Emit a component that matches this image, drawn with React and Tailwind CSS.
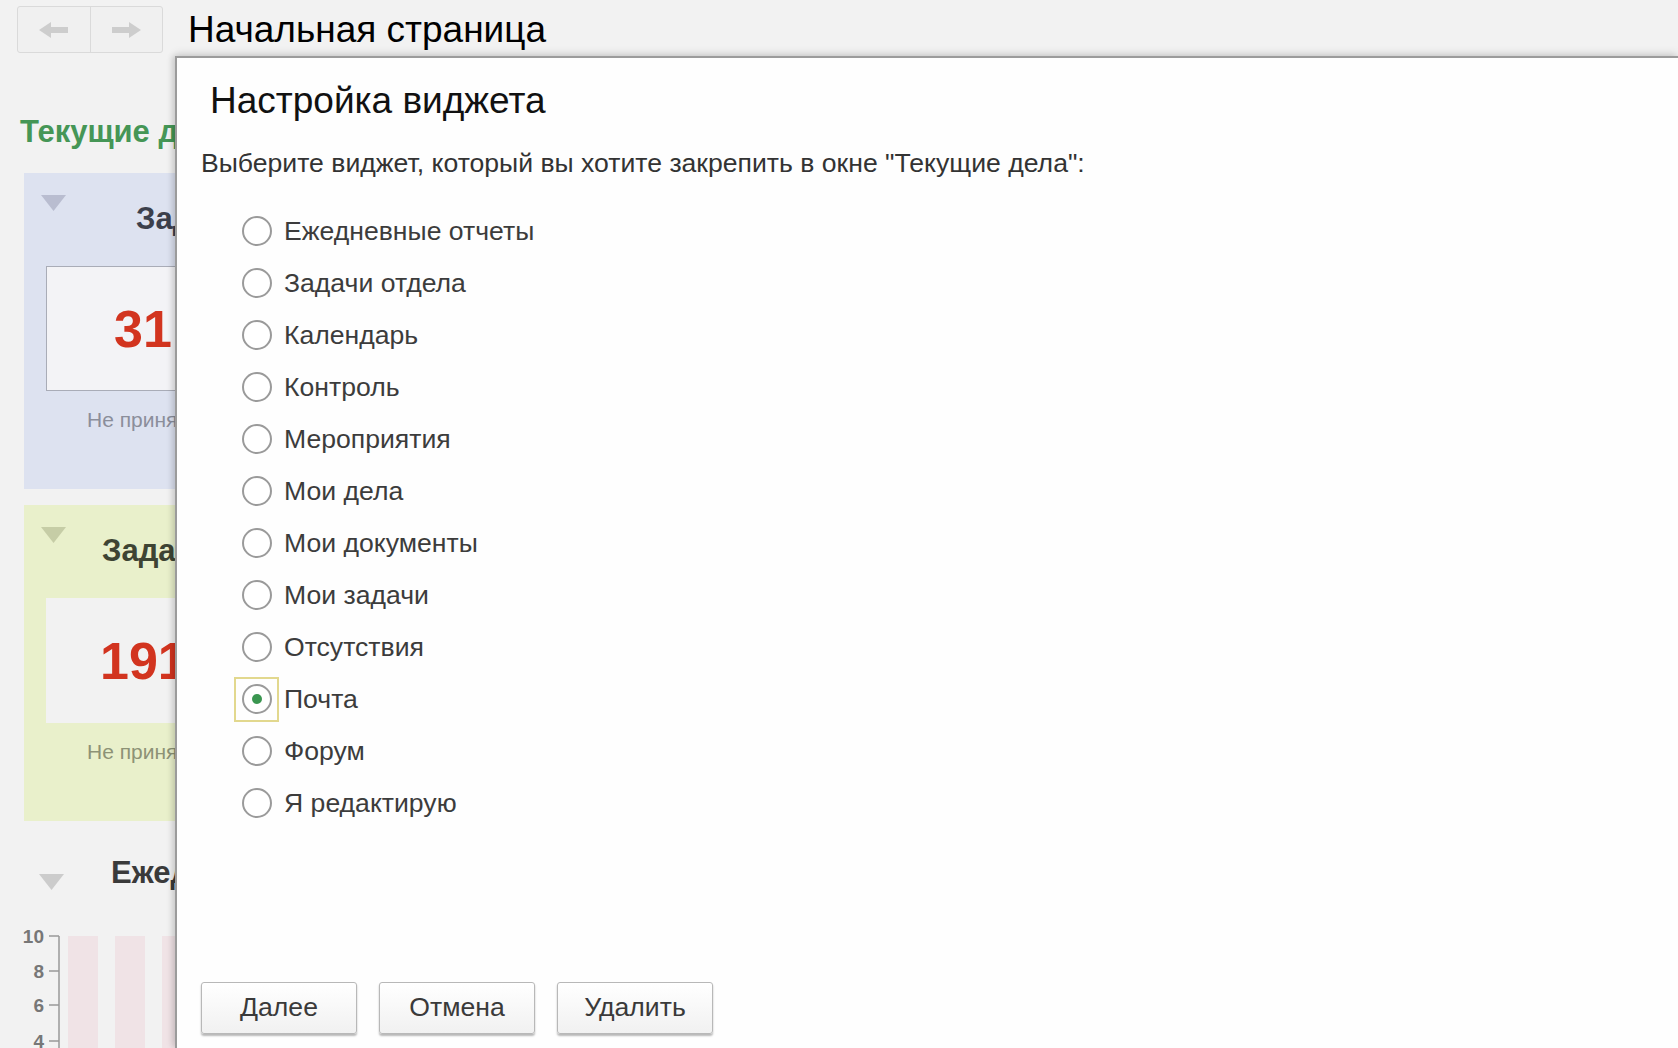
import React from "react";

const options = [
  "Ежедневные отчеты",
  "Задачи отдела",
  "Календарь",
  "Контроль",
  "Мероприятия",
  "Мои дела",
  "Мои документы",
  "Мои задачи",
  "Отсутствия",
  "Почта",
  "Форум",
  "Я редактирую",
];

const Triangle = ({ color, className = "" }) => (
  <svg width="25" height="16" viewBox="0 0 25 16" className={`shrink-0 ${className}`}>
    <polygon points="0,0 25,0 12.5,16" fill={color} />
  </svg>
);

const NavButtons = () => (
  <div className="flex h-[47px] w-[146px] shrink-0 rounded-[3px] border border-[#dadada] bg-[#f0f0f0]">
    <div className="flex flex-1 items-center justify-center border-r border-[#dadada]">
      <svg width="30" height="16" viewBox="0 0 30 16">
        <polygon points="0,8 12,0 12,5 29,5 29,11 12,11 12,16" fill="#cdcdcd" />
      </svg>
    </div>
    <div className="flex flex-1 items-center justify-center">
      <svg width="30" height="16" viewBox="0 0 30 16">
        <polygon points="30,8 18,0 18,5 1,5 1,11 18,11 18,16" fill="#cdcdcd" />
      </svg>
    </div>
  </div>
);

const Widget = ({ bg, tri, title, titleColor, titleGap, box, number, numPad, noteColor }) => (
  <div className={`flex h-[316px] w-[620px] flex-col pl-[17px] pt-[20px] ${bg}`}>
    <div className="flex h-[50px] items-start">
      <Triangle color={tri} className="mt-[2px]" />
      <span
        className={`self-center whitespace-nowrap text-[31px] font-bold leading-none ${titleColor} ${titleGap}`}
      >
        {title}
      </span>
    </div>
    <div className={`ml-[5px] mt-[23px] flex h-[125px] w-[400px] items-center ${box} ${numPad}`}>
      <span className="text-[52px] font-bold leading-none text-[#d2341f]">{number}</span>
    </div>
    <div className={`ml-[46px] mt-[16px] whitespace-nowrap text-[21px] leading-[26px] ${noteColor}`}>
      Не принято к исполнению
    </div>
  </div>
);

const Chart = () => (
  <svg width="175" height="130" viewBox="0 0 175 130" className="mt-[27px] shrink-0">
    {[0, 35, 69, 105].map((y, i) => (
      <g key={i}>
        <text
          x="44"
          y={y + 12 + 7}
          textAnchor="end"
          fontFamily="Liberation Sans, Arial, sans-serif"
          fontWeight="bold"
          fontSize="19"
          fill="#777"
        >
          {["10", "8", "6", "4"][i]}
        </text>
        <line x1="49" x2="59" y1={y + 12} y2={y + 12} stroke="#999" strokeWidth="1.5" />
      </g>
    ))}
    <line x1="59" x2="59" y1="12" y2="130" stroke="#999" strokeWidth="1.5" />
    <rect x="68" y="12" width="30" height="120" fill="#f0e3e6" />
    <rect x="115" y="12" width="30" height="120" fill="#f0e3e6" />
    <rect x="162" y="12" width="30" height="120" fill="#f0e3e6" />
  </svg>
);

const Radio = ({ label, checked }) => (
  <div className="flex h-[52px] items-center">
    <div
      className={`flex h-[45px] w-[45px] items-center justify-center border-2 ${
        checked ? "border-[#e2d88e]" : "border-transparent"
      }`}
    >
      <div className="flex h-[30px] w-[30px] items-center justify-center rounded-full border-2 border-[#9a9a9a] bg-white">
        {checked && <div className="h-[10px] w-[10px] rounded-full bg-[#3a9650]" />}
      </div>
    </div>
    <span className="ml-[5px] text-[26.6px] leading-[30px] text-[#3c3c3c]">{label}</span>
  </div>
);

const Button = ({ children }) => (
  <button className="flex h-[52px] w-[156px] items-center justify-center rounded-[3px] border border-[#b8b8b8] bg-gradient-to-b from-white to-[#f1f1f1] text-[26.6px] text-[#3a3a3a] shadow-[0_2px_2px_rgba(0,0,0,0.28)]">
    {children}
  </button>
);

export default function App() {
  return (
    <div className="relative h-[1048px] w-[1678px] overflow-hidden bg-[#f2f2f2] font-['Liberation_Sans',Arial,sans-serif]">
      {/* header */}
      <div className="flex h-[60px] items-start pl-[17px] pt-[6px]">
        <NavButtons />
        <h1 className="ml-[25px] mt-[3px] text-[37px] leading-[42px] text-black">
          Начальная страница
        </h1>
      </div>

      {/* page behind the dialog */}
      <div className="flex w-[176px] flex-col overflow-hidden">
        <div className="ml-[20px] mt-[56px] whitespace-nowrap text-[31px] font-bold leading-[32px] text-[#459656]">
          Текущие дела
        </div>
        <div className="ml-[24px] mt-[25px] flex flex-col gap-[16px]">
          <Widget
            bg="bg-[#dde2f0]"
            tri="#b9bdd0"
            title="Задачи мне"
            titleColor="text-[#3c404c]"
            titleGap="ml-[70px]"
            box="border border-[#a9acb7] bg-[#f3f3f6]"
            number="31"
            numPad="pl-[67px]"
            noteColor="text-[#8b8e9b]"
          />
          <Widget
            bg="bg-[#e9f0cb]"
            tri="#c6cda6"
            title="Задачи отдела"
            titleColor="text-[#3e4433]"
            titleGap="ml-[36px]"
            box="bg-[#f2f2f2]"
            number="191"
            numPad="pl-[54px]"
            noteColor="text-[#8d9276]"
          />
        </div>
        <div className="ml-[39px] mt-[26px] flex h-[50px] items-start">
          <Triangle color="#cccccc" className="mt-[27px]" />
          <span className="ml-[47px] self-center whitespace-nowrap text-[31px] font-bold leading-none text-[#3a3a3a]">
            Ежедневные отчеты
          </span>
        </div>
        <Chart />
      </div>

      {/* dialog */}
      <div className="absolute bottom-0 left-[175px] right-0 top-[56px] flex flex-col border-l-2 border-t-2 border-[#9b9b9b] bg-[#fefefe] pl-[24px] shadow-[0_-3px_8px_rgba(0,0,0,0.1),-3px_0_6px_rgba(0,0,0,0.12)]">
        <h2 className="ml-[9px] mt-[22px] text-[37px] leading-[42px] text-[#111]">
          Настройка виджета
        </h2>
        <p className="mt-[26px] text-[26.6px] leading-[30px] text-[#333]">
          Выберите виджет, который вы хотите закрепить в окне "Текущие дела":
        </p>
        <div className="ml-[33px] mt-[27px] flex flex-col">
          {options.map((o) => (
            <Radio key={o} label={o} checked={o === "Почта"} />
          ))}
        </div>
        <div className="mb-[14px] mt-auto flex gap-[22px]">
          <Button>Далее</Button>
          <Button>Отмена</Button>
          <Button>Удалить</Button>
        </div>
      </div>
    </div>
  );
}
